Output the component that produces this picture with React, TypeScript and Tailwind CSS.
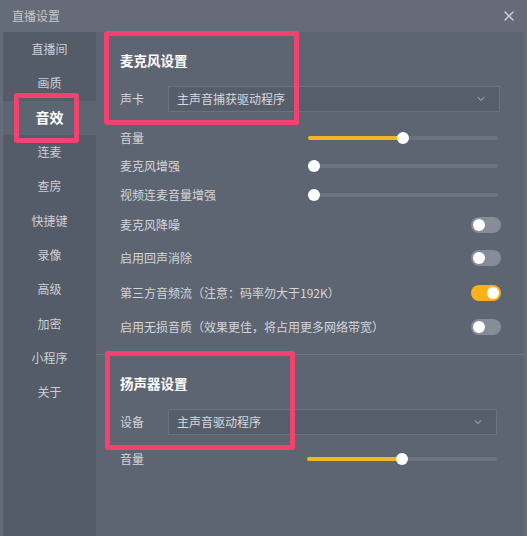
import { ChevronDown, X } from 'lucide-react'

const NAV = ['直播间', '画质', '音效', '连麦', '查房', '快捷键', '录像', '高级', '加密', '小程序', '关于']

function Slider({ value }: { value: number }) {
  return (
    <div className="relative mr-[3px] h-3 w-[190px]">
      <div className="absolute left-0 right-0 top-[4px] h-[4px] rounded-full bg-[#6d7380]" />
      <div className="absolute left-0 top-[4px] h-[4px] rounded-full bg-[#f3b526]" style={{ width: `${value}%` }} />
      <div
        className="absolute top-0 h-3 w-3 -translate-x-1/2 rounded-full bg-white"
        style={{ left: `${value}%` }}
      />
    </div>
  )
}

function Toggle({ on }: { on?: boolean }) {
  return (
    <div className={`flex h-4 w-[30px] items-center rounded-full px-[2px] ${on ? 'justify-end bg-[#f7b21b]' : 'justify-start bg-[#868c98]'}`}>
      <div className="h-3 w-3 rounded-full bg-white" />
    </div>
  )
}

function Select({ text, inset = false }: { text: string; inset?: boolean }) {
  return (
    <div className={`${inset ? 'mr-[3px]' : 'mr-[1px]'} flex h-[26px] flex-1 items-center justify-between border border-[#6b717d] bg-[#575e6b] pl-2 pr-3 text-[12px] text-[#d6d9de]`}>
      <span>{text}</span>
      <ChevronDown className="h-3 w-3 text-[#b9bdc5]" strokeWidth={2} />
    </div>
  )
}

export default function App() {
  return (
    <div
      className="relative flex h-[536px] w-[527px] flex-col overflow-hidden bg-[#5e6572] text-[12px] text-[#d3d6db]"
      style={{ fontFamily: '"Noto Sans CJK SC", "Noto Sans", sans-serif' }}
    >
      {/* title bar */}
      <div className="flex h-[32px] shrink-0 items-center justify-between bg-[#656b78] pl-[12px] pr-[10px]">
        <span className="text-[12px] text-[#c5c8ce]">直播设置</span>
        <X className="h-4 w-4 text-[#cfd2d7]" strokeWidth={2} />
      </div>

      <div className="flex flex-1 border-l-[3px] border-r-[3px] border-[#666c78]">
        {/* sidebar */}
        <div className="w-[93px] shrink-0 bg-[#555c69]">
          {NAV.map((n) => (
            <div
              key={n}
              className={`flex h-[34.3px] items-center justify-center ${n === '音效' ? 'bg-[#5e6572] text-[14px] font-bold text-white' : 'text-[12px] text-[#cdd0d6]'}`}
            >
              {n}
            </div>
          ))}
        </div>

        {/* content */}
        <div className="flex flex-1 flex-col">
          <div className="pl-[24px] pr-[23px] pt-[18px]">
            <div className="text-[13.5px] font-bold text-white">麦克风设置</div>
            <div className="mt-[16px] flex items-center">
              <span className="w-[48px]">声卡</span>
              <Select text="主声音捕获驱动程序" />
            </div>
            <div className="mt-[11px] flex h-[28.5px] items-center justify-between">
              <span>音量</span>
              <Slider value={50} />
            </div>
            <div className="flex h-[28.5px] items-center justify-between">
              <span>麦克风增强</span>
              <Slider value={3} />
            </div>
            <div className="flex h-[29px] items-center justify-between">
              <span>视频连麦音量增强</span>
              <Slider value={3} />
            </div>
            <div className="flex h-[32px] items-center justify-between">
              <span>麦克风降噪</span>
              <Toggle />
            </div>
            <div className="flex h-[34px] items-center justify-between">
              <span>启用回声消除</span>
              <Toggle />
            </div>
            <div className="flex h-[34.5px] items-center justify-between">
              <span>第三方音频流（注意：码率勿大于192K）</span>
              <Toggle on />
            </div>
            <div className="flex h-[35px] items-center justify-between">
              <span>启用无损音质（效果更佳，将占用更多网络带宽）</span>
              <Toggle />
            </div>
          </div>

          <div className="mt-[9px] h-px bg-[#6d7380]" />

          <div className="pl-[24px] pr-[24px] pt-[18px]">
            <div className="text-[13.5px] font-bold text-white">扬声器设置</div>
            <div className="mt-[16px] flex items-center">
              <span className="w-[48px]">设备</span>
              <Select text="主声音驱动程序" inset />
            </div>
            <div className="mt-[10px] flex h-[28px] items-center justify-between">
              <span>音量</span>
              <Slider value={50} />
            </div>
          </div>
        </div>
      </div>

      {/* annotation boxes */}
      <div className="pointer-events-none absolute left-[104px] top-[31px] h-[94px] w-[195px] rounded-[3px] border-[5px] border-[#f2426f]" />
      <div className="pointer-events-none absolute left-[14px] top-[93px] h-[50px] w-[65px] rounded-[3px] border-[5px] border-[#f2426f]" />
      <div className="pointer-events-none absolute left-[105px] top-[351px] h-[99px] w-[190px] rounded-[3px] border-[5px] border-[#f2426f]" />
    </div>
  )
}
